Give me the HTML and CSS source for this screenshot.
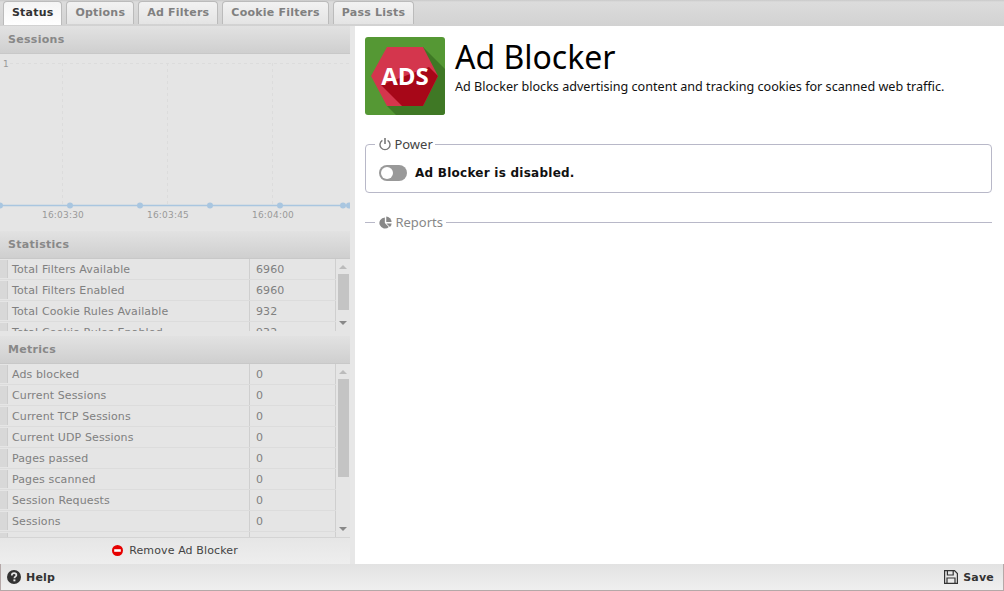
FILE: index.html
```html
<!DOCTYPE html>
<html lang="en">
<head>
<meta charset="utf-8">
<title>Ad Blocker</title>
<link rel="stylesheet" href="styles.css">
</head>
<body>
<div class="app">
  <nav class="tabs">
    <div class="tab active">Status</div>
    <div class="tab">Options</div>
    <div class="tab">Ad Filters</div>
    <div class="tab">Cookie Filters</div>
    <div class="tab">Pass Lists</div>
  </nav>
  <div class="main">
    <aside class="side">
      <div class="panels">
        <section class="panel chart-panel">
          <h2 class="panel-title">Sessions</h2>
          <svg class="chart" width="350" height="172" viewBox="0 0 350 172">
            <text class="axis" x="3" y="13">1</text>
            <path class="grid" d="M10 9.5H350M62.5 9V152M167.5 9V152M272.5 9V152"/>
            <path class="line" d="M0 151.5H350"/>
            <g class="dots">
              <circle cx="0" cy="151.5" r="3"/><circle cx="70" cy="151.5" r="3"/><circle cx="140" cy="151.5" r="3"/><circle cx="210" cy="151.5" r="3"/><circle cx="280" cy="151.5" r="3"/><circle cx="343" cy="151.5" r="3"/><circle cx="349" cy="151.5" r="3"/>
            </g>
            <text class="axis" x="63" y="164" text-anchor="middle">16:03:30</text>
            <text class="axis" x="168" y="164" text-anchor="middle">16:03:45</text>
            <text class="axis" x="273" y="164" text-anchor="middle">16:04:00</text>
          </svg>
        </section>
        <section class="panel stats-panel">
          <h2 class="panel-title">Statistics</h2>
          <div class="grid-wrap stats-wrap">
            <div class="rows">
              <div class="row"><span class="handle"></span><span class="name">Total Filters Available</span><span class="val">6960</span></div>
              <div class="row"><span class="handle"></span><span class="name">Total Filters Enabled</span><span class="val">6960</span></div>
              <div class="row"><span class="handle"></span><span class="name">Total Cookie Rules Available</span><span class="val">932</span></div>
              <div class="row"><span class="handle"></span><span class="name">Total Cookie Rules Enabled</span><span class="val">932</span></div>
            </div>
            <div class="scrollbar">
              <span class="arrow up"></span>
              <span class="thumb thumb-stats"></span>
              <span class="arrow down"></span>
            </div>
          </div>
        </section>
        <section class="panel metrics-panel">
          <h2 class="panel-title">Metrics</h2>
          <div class="grid-wrap metrics-wrap">
            <div class="rows">
              <div class="row"><span class="handle"></span><span class="name">Ads blocked</span><span class="val">0</span></div>
              <div class="row"><span class="handle"></span><span class="name">Current Sessions</span><span class="val">0</span></div>
              <div class="row"><span class="handle"></span><span class="name">Current TCP Sessions</span><span class="val">0</span></div>
              <div class="row"><span class="handle"></span><span class="name">Current UDP Sessions</span><span class="val">0</span></div>
              <div class="row"><span class="handle"></span><span class="name">Pages passed</span><span class="val">0</span></div>
              <div class="row"><span class="handle"></span><span class="name">Pages scanned</span><span class="val">0</span></div>
              <div class="row"><span class="handle"></span><span class="name">Session Requests</span><span class="val">0</span></div>
              <div class="row"><span class="handle"></span><span class="name">Sessions</span><span class="val">0</span></div>
              <div class="row"><span class="handle"></span><span class="name"></span><span class="val"></span></div>
            </div>
            <div class="scrollbar">
              <span class="arrow up"></span>
              <span class="thumb thumb-metrics"></span>
              <span class="arrow down"></span>
            </div>
          </div>
        </section>
        <div class="remove">
          <svg class="remove-icon" width="11" height="11" viewBox="0 0 12 12"><circle cx="6" cy="6" r="6" fill="#e60000"/><rect x="2.4" y="4.6" width="7.2" height="2.8" fill="#fff"/></svg>
          <span>Remove Ad Blocker</span>
        </div>
      </div>
    </aside>
    <main class="content">
      <header class="head">
        <svg class="logo" width="80" height="78" viewBox="0 0 80 78">
          <rect width="80" height="78" rx="3" fill="#559834"/>
          <path d="M58 10L80 32V75a3 3 0 0 1-3 3H31L22 69z" fill="#3f7825"/>
          <path d="M6 39L22 10H58L73 39L58 69H22z" fill="#d4364d"/>
          <path d="M16 48L37 69H58L73 39L64 30z" fill="#a70718"/>
          <text class="logo-text" x="40" y="48" text-anchor="middle">ADS</text>
        </svg>
        <div class="head-text">
          <h1>Ad Blocker</h1>
          <p>Ad Blocker blocks advertising content and tracking cookies for scanned web traffic.</p>
        </div>
      </header>
      <fieldset class="power">
        <legend>
          <svg class="legend-icon" width="12" height="14" viewBox="0 0 12 14"><path d="M3.4 3.4a5 5 0 1 0 5.2 0" fill="none" stroke="#777" stroke-width="1.4"/><path d="M6 1V7" stroke="#777" stroke-width="1.6"/></svg>
          Power
        </legend>
        <div class="toggle-row">
          <span class="toggle"><span class="knob"></span></span>
          <strong>Ad Blocker is disabled.</strong>
        </div>
      </fieldset>
      <fieldset class="reports">
        <legend>
          <svg class="legend-icon" width="13" height="13" viewBox="0 0 14 14"><path d="M6.3 1.5V7.5L10.6 11.8A6 6 0 1 1 6.3 1.5z" fill="#888"/><path d="M7.8.6A6 6 0 0 1 13.6 6.4H7.8z" fill="#888"/><path d="M8 8H13.6A6 6 0 0 1 11.8 11.8z" fill="#888"/></svg>
          Reports
        </legend>
      </fieldset>
    </main>
  </div>
  <footer class="foot">
    <div class="foot-btn">
      <svg width="14" height="14" viewBox="0 0 14 14"><circle cx="7" cy="7" r="7" fill="#333"/><path d="M4.8 5.4C4.8 4 5.8 3.2 7.1 3.2S9.4 4 9.4 5.2C9.4 6.6 7.4 6.8 7.4 8.2" fill="none" stroke="#e8e8e8" stroke-width="1.7"/><rect x="6.4" y="9.4" width="2" height="1.9" fill="#e8e8e8"/></svg>
      <span>Help</span>
    </div>
    <div class="foot-btn">
      <svg width="14" height="14" viewBox="0 0 14 14"><path d="M.6.6H10.5L13.4 3.5V13.4H.6z" fill="none" stroke="#333" stroke-width="1.2"/><path d="M3.4 1V5H9.2V1M3 13V8H11V13" fill="none" stroke="#333" stroke-width="1.2"/></svg>
      <span>Save</span>
    </div>
  </footer>
</div>
</body>
</html>
```
FILE: styles.css
```css
* { box-sizing: border-box; }
html, body { margin: 0; height: 100%; }
body { font-family: "DejaVu Sans", sans-serif; font-size: 11px; background: #fff; overflow: hidden; }
.app { display: flex; flex-direction: column; height: 591px; width: 1004px; }

.tabs { display: flex; height: 26px; padding: 1px 0 0 3px; gap: 4px; background: linear-gradient(#c9c9c9 0, #dcdcdc 2px, #d2d2d2); flex: none; }
.tab { height: 23px; padding: 0 8px; line-height: 21px; font-weight: bold; color: #808080; background: linear-gradient(#f2f2f2, #e4e4e4); border: 1px solid #bbb; border-bottom: 0; border-radius: 4px 4px 0 0; letter-spacing: .22px; }
.tab.active { height: 24px; color: #333; background: linear-gradient(#f4f4f4, #fff); letter-spacing: .2px; }

.main { flex: 1; display: flex; min-height: 0; }
.side { width: 355px; flex: none; background: #e7e7e7; }
.panels { width: 350px; display: flex; flex-direction: column; height: 100%; background: #e5e5e5; }
.panel-title { margin: 0; height: 28px; padding-left: 8px; line-height: 27px; font-size: 11px; font-weight: bold; color: #888; letter-spacing: .3px; background: linear-gradient(#e2e2e2, #cfcfcf); border-bottom: 1px solid #c8c8c8; }
.chart-panel { height: 205px; }
.chart { display: block; }
.axis { font-family: "DejaVu Sans", sans-serif; font-size: 9px; letter-spacing: .2px; fill: #999; }
.grid { fill: none; stroke: #dcdcdc; stroke-dasharray: 3 3; }
.line { stroke: #a9c6e0; stroke-width: 1.5; }
.dots circle { fill: #a9c6e0; }

.grid-wrap { display: flex; overflow: hidden; }
.stats-wrap { height: 72px; margin-bottom: 5px; }
.metrics-wrap { height: 173px; }
.rows { width: 336px; flex: none; }
.row { display: flex; height: 21px; line-height: 22px; color: #808080; letter-spacing: .12px; border-bottom: 1px solid #dcdcdc; }
.handle { margin: 1px 0; background: #d8d8d8; border-right: 1px solid #ccc; width: 8px; flex: none; }
.name { width: 242px; padding-left: 4px; flex: none; border-right: 1px solid #cfcfcf; }
.val { flex: 1; padding-left: 6px; border-right: 1px solid #cfcfcf; }
.scrollbar { width: 14px; flex: none; display: flex; flex-direction: column; align-items: center; position: relative; padding-top: 6px; }
.thumb { width: 11px; background: #c4c4c4; margin-top: 5px; }
.thumb-stats { height: 36px; }
.thumb-metrics { height: 98px; }
.arrow { width: 0; height: 0; border-left: 4px solid transparent; border-right: 4px solid transparent; }
.arrow.up { border-bottom: 4px solid #bbb; }
.arrow.down { border-top: 4px solid #888; position: absolute; bottom: 6px; }

.remove { flex: 1; display: flex; align-items: center; justify-content: center; gap: 6px; padding-bottom: 2px; color: #444; letter-spacing: .12px; background: linear-gradient(#e6e6e6, #eeeeee); border-top: 1px solid #d4d4d4; }

.content { flex: 1; min-width: 0; padding: 11px 12px 0 10px; background: #fff; }
.head { display: flex; gap: 10px; }
.logo { flex: none; }
.logo-text { font-family: "Open Sans", sans-serif; font-weight: 700; font-size: 24px; fill: #fff; }
.head-text h1 { margin: 0; font: 400 32px/40px "Noto Sans", sans-serif; color: #000; }
.head-text p { margin: 0; font: 400 12.6px/20px "Noto Sans", sans-serif; color: #111; }

fieldset { margin: 0; padding: 0; border: 0; min-width: 0; }
legend { font: 400 13px/16px "Noto Sans", sans-serif; color: #444; }
.legend-icon { vertical-align: -2px; }
.power { margin-top: 21px; height: 57px; border: 1px solid #b8b8c8; border-radius: 4px; padding: 0 13px; }
.power legend { margin-left: -4px; padding: 0 2px 0 4px; }
.toggle-row { display: flex; align-items: center; gap: 8px; margin-top: 13px; }
.toggle { width: 28px; height: 16px; border-radius: 8px; background: #999; padding: 2px; display: block; flex: none; }
.knob { display: block; width: 12px; height: 12px; border-radius: 50%; background: #fff; }
.toggle-row strong { font-size: 12px; color: #111; letter-spacing: .25px; }
.reports { margin-top: 21px; border-top: 1px solid #b8b8c8; }
.reports legend { color: #888; margin-left: 10px; padding: 0 3px 0 4px; }

.foot { height: 27px; flex: none; display: flex; justify-content: space-between; align-items: center; padding: 0 9px 0 6px; background: linear-gradient(#e2e2e2, #efefef); border-left: 1px solid #b5a8a8; border-right: 1px solid #b5a8a8; border-bottom: 1px solid #b5a8a8; }
.foot-btn { display: flex; align-items: center; gap: 5px; font-weight: bold; color: #333; letter-spacing: .2px; }
```
